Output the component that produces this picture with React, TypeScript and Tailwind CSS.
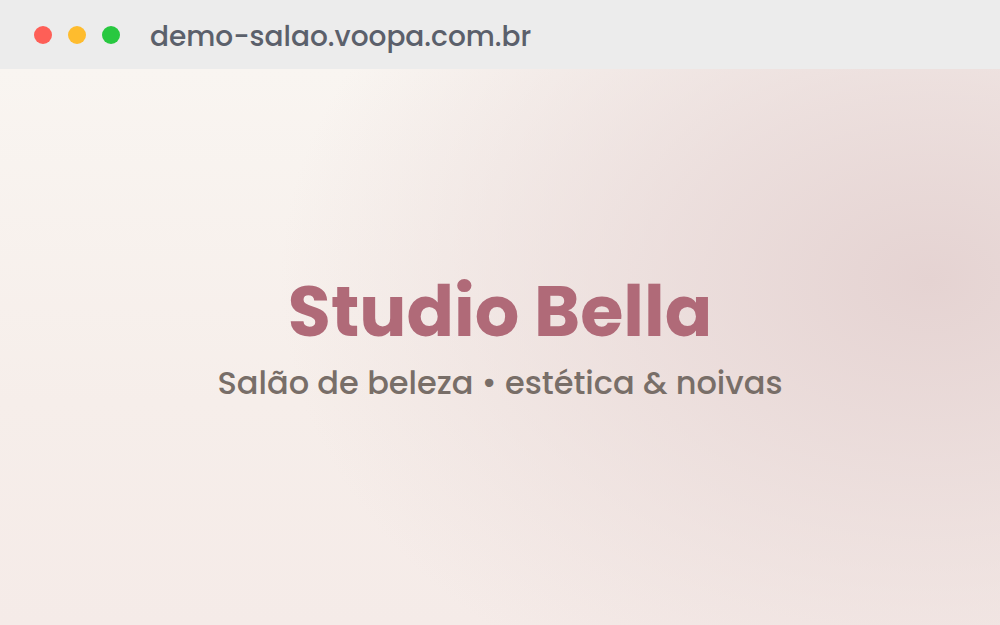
export default function App() {
  return (
    <div className="w-[1000px] h-[625px] flex flex-col overflow-hidden" style={{ fontFamily: '"Poppins", Inter, "Noto Sans", sans-serif' }}>
      <div className="h-[69px] shrink-0 bg-[#ececec] flex items-center pl-[34px]">
        <div className="flex items-center gap-[16px]">
          <span className="w-[18px] h-[18px] rounded-full bg-[#fe5f57]" />
          <span className="w-[18px] h-[18px] rounded-full bg-[#febc2e]" />
          <span className="w-[18px] h-[18px] rounded-full bg-[#28c840]" />
        </div>
        <span className="ml-[30px] text-[28px] leading-none font-medium text-[#5b606b] pt-[4px]">demo-salao.voopa.com.br</span>
      </div>
      <div className="flex-1 flex flex-col items-center justify-center pb-[18px] bg-[radial-gradient(ellipse_65%_85%_at_93%_38%,#e5d3d2_0%,rgba(232,216,215,0.75)_40%,rgba(245,236,233,0)_100%),linear-gradient(180deg,#f9f5f1_0%,#f6eeea_60%,#f5ebe8_100%)]">
        <h1 className="text-[70px] leading-none font-bold text-[#b06a78]">Studio Bella</h1>
        <p className="mt-[20px] text-[32px] leading-none font-medium text-[#786e68]">Salão de beleza • estética &amp; noivas</p>
      </div>
    </div>
  );
}
